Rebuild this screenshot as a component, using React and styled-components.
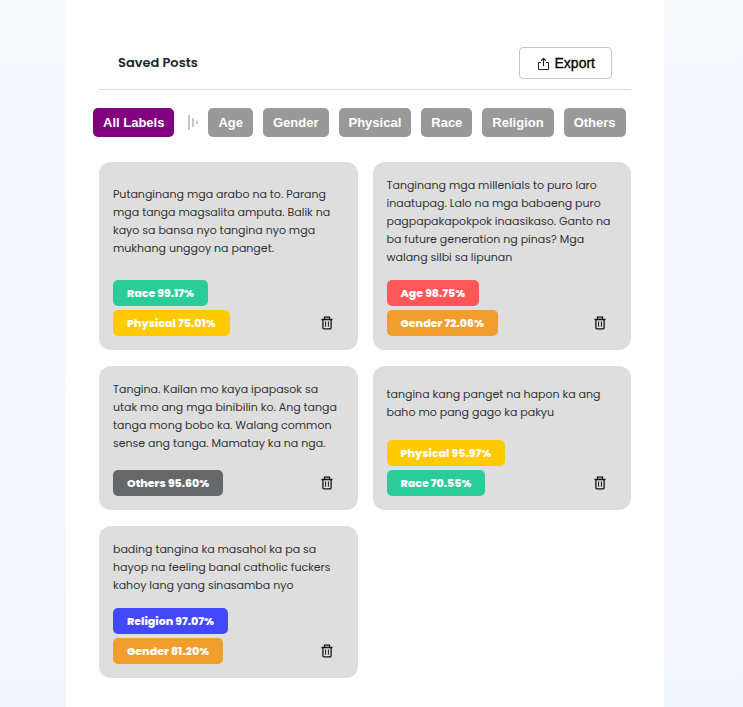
import React, { useState } from "react";
import styled, { createGlobalStyle } from "styled-components";

const GlobalStyle = createGlobalStyle`
  *, *::before, *::after { box-sizing: border-box; }
  body {
    margin: 0;
    font-family: Poppins, Inter, sans-serif;
    color: #212529;
    background: #f4f7fe;
  }
`;

const Page = styled.div`
  min-height: 100vh;
  padding: 0 79px 0 66px;
  background: linear-gradient(180deg, #f9fafe 0%, #f1f5fd 100%);
`;

const Panel = styled.main`
  min-height: 100vh;
  padding: 47px 33px 28px;
  background: #ffffff;
`;

const Header = styled.header`
  display: flex;
  align-items: center;
  justify-content: space-between;
  padding: 0 19px 10px;
  border-bottom: 1px solid #dcdcdc;
`;

const Title = styled.h1`
  margin: 0;
  font-size: 13px;
  line-height: 20px;
  font-weight: 600;
`;

const ExportButton = styled.button`
  display: flex;
  align-items: center;
  justify-content: center;
  gap: 5px;
  height: 32px;
  padding: 0 16px 0 17px;
  border: 1px solid #c8c8c8;
  border-radius: 4px;
  background: #ffffff;
  color: #000000;
  font: 14px "Liberation Sans", Arial, sans-serif;
  -webkit-text-stroke: 0.3px #000000;
  cursor: pointer;
`;

const Filters = styled.nav`
  display: flex;
  align-items: center;
  gap: 10px;
  margin: 18px -6px 0;
`;

const FilterButton = styled.button`
  height: 29px;
  padding: 0 10px;
  border: 0;
  border-radius: 5px;
  background: ${(p) => (p.$active ? "#800080" : "#999999")};
  color: #ffffff;
  font: bold 13px "Liberation Sans", Arial, sans-serif;
  white-space: nowrap;
  cursor: pointer;
`;

const Divider = styled.svg`
  flex: none;
  margin-left: 3px;
`;

const Posts = styled.section`
  display: grid;
  grid-template-columns: repeat(2, minmax(0, 1fr));
  gap: 16px 15px;
  margin-top: 25px;
`;

const Card = styled.article`
  display: flex;
  flex-direction: column;
  gap: 14px;
  padding: 14px;
  border-radius: 12px;
  background: #dedede;
`;

const PostText = styled.p`
  display: flex;
  flex: 1;
  align-items: center;
  margin: 0;
  font-size: 11px;
  line-height: 18px;
  color: #303336;
  white-space: pre-line;
`;

const CardFooter = styled.footer`
  display: flex;
  align-items: flex-end;
  justify-content: space-between;
  min-height: 30px;
  padding-right: 7px;
`;

const Badges = styled.ul`
  display: flex;
  flex-direction: column;
  align-items: flex-start;
  gap: 4px;
  margin: 0;
  padding: 0;
  list-style: none;
`;

const Badge = styled.li`
  padding: 0 14px;
  border-radius: 5px;
  background: ${(p) => p.$color};
  color: #ffffff;
  font-size: 11px;
  line-height: 26px;
  font-weight: 800;
  white-space: nowrap;
`;

const IconButton = styled.button`
  display: flex;
  padding: 6px 4px;
  border: 0;
  background: transparent;
  color: #111111;
  cursor: pointer;
`;

const COLORS = {
  Race: "#2acd9a",
  Physical: "#ffcb00",
  Age: "#ff5757",
  Gender: "#f09e2e",
  Others: "#65686b",
  Religion: "#4248fb",
};

const LABELS = ["Age", "Gender", "Physical", "Race", "Religion", "Others"];

const POSTS = [
  {
    text: "Putanginang mga arabo na to. Parang\nmga tanga magsalita amputa. Balik na\nkayo sa bansa nyo tangina nyo mga\nmukhang unggoy na panget.",
    labels: [["Race", "99.17%"], ["Physical", "75.01%"]],
  },
  {
    text: "Tanginang mga millenials to puro laro\ninaatupag. Lalo na mga babaeng puro\npagpapakapokpok inaasikaso. Ganto na\nba future generation ng pinas? Mga\nwalang silbi sa lipunan",
    labels: [["Age", "98.75%"], ["Gender", "72.06%"]],
  },
  {
    text: "Tangina. Kailan mo kaya ipapasok sa\nutak mo ang mga binibilin ko. Ang tanga\ntanga mong bobo ka. Walang common\nsense ang tanga. Mamatay ka na nga.",
    labels: [["Others", "95.60%"]],
  },
  {
    text: "tangina kang panget na hapon ka ang\nbaho mo pang gago ka pakyu",
    labels: [["Physical", "95.97%"], ["Race", "70.55%"]],
  },
  {
    text: "bading tangina ka masahol ka pa sa\nhayop na feeling banal catholic fuckers\nkahoy lang yang sinasamba nyo",
    labels: [["Religion", "97.07%"], ["Gender", "81.20%"]],
  },
];

function ShareIcon() {
  return (
    <svg width="13" height="13" viewBox="0 0 13 13" fill="none" stroke="#222" strokeWidth="1" aria-hidden="true">
      <path d="M4 5.5H1.5v7h10v-7H9" />
      <path d="M6.5 9V1.5M4 3.8l2.5-2.5L9 3.8" strokeWidth="1.2" />
    </svg>
  );
}

function TrashIcon() {
  return (
    <svg width="12" height="14" viewBox="0 0 12 14" fill="none" stroke="currentColor" aria-hidden="true">
      <path d="M0.5 3.5h11" strokeWidth="1.5" />
      <path d="M3.5 3V1.2h5V3" strokeWidth="1.2" />
      <path d="M1.9 3.5v8.3q0 1 1 1h6.2q1 0 1-1V3.5" strokeWidth="1.3" />
      <path d="M4.6 5.5v5.2M7.4 5.5v5.2" strokeWidth="1" />
    </svg>
  );
}

export default function App() {
  const [active, setActive] = useState("All Labels");
  return (
    <>
      <GlobalStyle />
      <Page>
        <Panel>
          <Header>
            <Title>Saved Posts</Title>
            <ExportButton type="button">
              <ShareIcon />
              Export
            </ExportButton>
          </Header>
          <Filters aria-label="Labels">
            <FilterButton type="button" $active={active === "All Labels"} onClick={() => setActive("All Labels")}>
              All Labels
            </FilterButton>
            <Divider width="11" height="17" viewBox="0 0 11 17" fill="#c8c8c8" aria-hidden="true">
              <path d="M1 1h2v15H1zM5 4h2v9H5zM9 7h2v3H9z" />
            </Divider>
            {LABELS.map((label) => (
              <FilterButton key={label} type="button" $active={active === label} onClick={() => setActive(label)}>
                {label}
              </FilterButton>
            ))}
          </Filters>
          <Posts>
            {POSTS.map((post) => (
              <Card key={post.text}>
                <PostText>{post.text}</PostText>
                <CardFooter>
                  <Badges>
                    {post.labels.map(([name, score]) => (
                      <Badge key={name} $color={COLORS[name]}>
                        {name} {score}
                      </Badge>
                    ))}
                  </Badges>
                  <IconButton type="button" aria-label="Delete post">
                    <TrashIcon />
                  </IconButton>
                </CardFooter>
              </Card>
            ))}
          </Posts>
        </Panel>
      </Page>
    </>
  );
}
